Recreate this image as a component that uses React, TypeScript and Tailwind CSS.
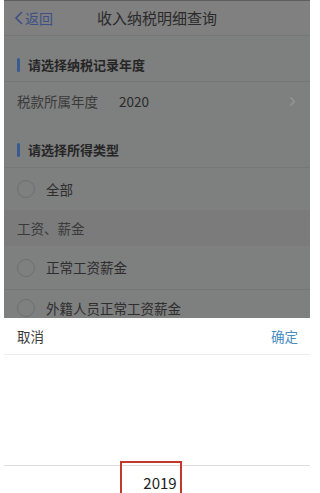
import React from "react";

const font = { fontFamily: '"Noto Sans CJK SC", "Noto Sans", sans-serif' };

function Radio() {
  return <span className="w-[18px] h-[18px] rounded-full border border-[#6e6e6e] shrink-0" />;
}

export default function App() {
  return (
    <div className="w-[320px] h-[493px] bg-white overflow-hidden relative" style={font}>
      <div className="ml-[4px] w-[306px] flex flex-col">
        <div className="h-[318px] bg-[#7e7f7f] overflow-hidden flex flex-col border-t border-[#5e5e5e]">
          <div className="h-[35px] shrink-0 relative flex items-center border-b border-[#767676] bg-[#808080]">
            <div className="flex items-center pl-[10px] text-[#3d4f86] text-[14px]">
              <svg width="10" height="16" viewBox="0 0 10 16" className="mr-[1px]">
                <path d="M8 2 L2 8 L8 14" fill="none" stroke="#3d4f86" strokeWidth="1.6" />
              </svg>
              <span>返回</span>
            </div>
            <div className="absolute left-0 right-0 text-center text-[15px] text-[#2a2a2a] pointer-events-none">收入纳税明细查询</div>
          </div>
          <div className="h-[12px] shrink-0" />
          <div className="h-[34px] shrink-0 flex items-center pl-[13px] border-b border-[#767676]">
            <span className="w-[3px] h-[14px] bg-[#3a5a94] rounded-sm mr-[8px]" />
            <span className="text-[13px] font-bold text-[#262626]">请选择纳税记录年度</span>
          </div>
          <div className="h-[38px] shrink-0 flex items-center pl-[13px] pr-[14px] text-[13.5px] text-[#333]">
            <span className="text-[#3a3a3a]">税款所属年度</span>
            <span className="ml-[21px] text-[#2a2a2a]">2020</span>
            <svg width="7" height="11" viewBox="0 0 7 11" className="ml-auto">
              <path d="M1.5 1.5 L5.5 5.5 L1.5 9.5" fill="none" stroke="#999" strokeWidth="1.2" />
            </svg>
          </div>
          <div className="h-[12px] shrink-0" />
          <div className="h-[36px] shrink-0 flex items-center pl-[13px] border-b border-[#767676]">
            <span className="w-[3px] h-[14px] bg-[#3a5a94] rounded-sm mr-[8px]" />
            <span className="text-[13px] font-bold text-[#262626]">请选择所得类型</span>
          </div>
          <div className="h-[42px] shrink-0 flex items-center pl-[13px] text-[13.5px] text-[#2e2e2e]">
            <Radio />
            <span className="ml-[11px]">全部</span>
          </div>
          <div className="h-[36px] shrink-0 flex items-center pl-[13px] text-[13.5px] text-[#3a3a3a] bg-[#7b7b7b]">
            工资、薪金
          </div>
          <div className="h-[44px] shrink-0 flex items-center pl-[13px] text-[13.5px] text-[#2e2e2e] border-b border-[#767676]">
            <Radio />
            <span className="ml-[11px]">正常工资薪金</span>
          </div>
          <div className="h-[40px] shrink-0 flex items-center pl-[13px] text-[13.5px] text-[#2e2e2e] pb-[4px]">
            <Radio />
            <span className="ml-[11px]">外籍人员正常工资薪金</span>
          </div>
        </div>
        <div className="h-[175px] bg-white flex flex-col">
          <div className="h-[37px] shrink-0 flex items-center justify-between pl-[13px] pr-[12px] text-[13.5px] border-b border-[#ececec]">
            <span className="text-[#3a3a3a]">取消</span>
            <span className="text-[#4a8ec2]">确定</span>
          </div>
          <div className="h-[111px] shrink-0 border-b border-[#dedede]" />
          <div className="flex-1 flex justify-center items-start pt-[6px] text-[15px] text-[#222]">
            <span className="ml-[6px]">2019</span>
          </div>
        </div>
      </div>
      <div className="absolute left-[120px] top-[461px] w-[62px] h-[40px] border-2 border-[#c0392b]" />
    </div>
  );
}
